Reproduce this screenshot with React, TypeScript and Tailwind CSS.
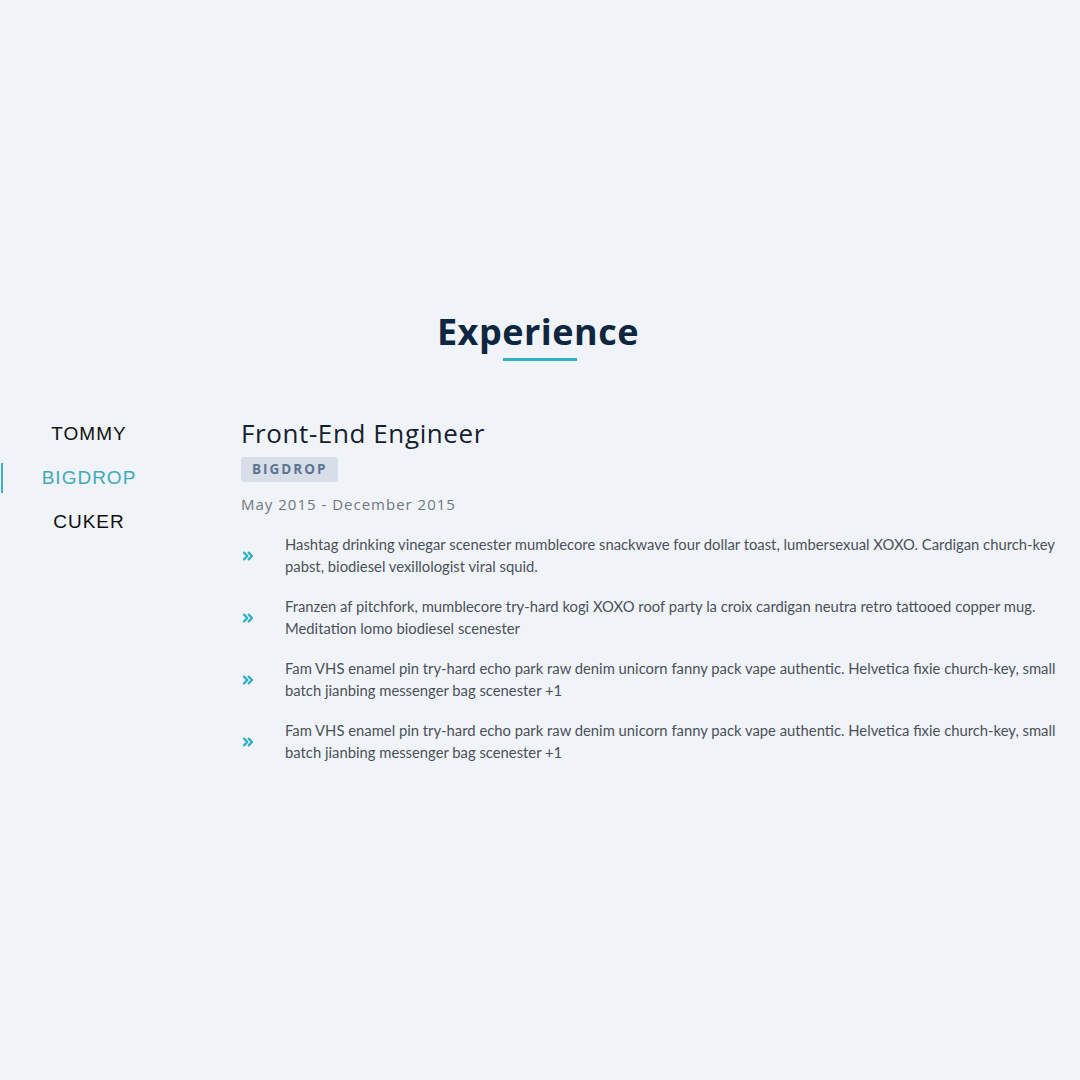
import React from "react";
import { ChevronsRight } from "lucide-react";

const jobs = ["TOMMY", "BIGDROP", "CUKER"];

const points = [
  "Hashtag drinking vinegar scenester mumblecore snackwave four dollar toast, lumbersexual XOXO. Cardigan church-key pabst, biodiesel vexillologist viral squid.",
  "Franzen af pitchfork, mumblecore try-hard kogi XOXO roof party la croix cardigan neutra retro tattooed copper mug. Meditation lomo biodiesel scenester",
  "Fam VHS enamel pin try-hard echo park raw denim unicorn fanny pack vape authentic. Helvetica fixie church-key, small batch jianbing messenger bag scenester +1",
  "Fam VHS enamel pin try-hard echo park raw denim unicorn fanny pack vape authentic. Helvetica fixie church-key, small batch jianbing messenger bag scenester +1",
];

const App = () => {
  const active = 1;
  return (
    <div className="w-full min-h-[1080px] bg-[#f0f4f9] pt-[308px] font-['Open_Sans',sans-serif]">
      <div className="flex flex-col items-center">
        <h2 className="text-[36px] font-bold text-[#0f2640] tracking-[0.5px] leading-[48px] mr-[4px]">Experience</h2>
        <div className="w-[74px] h-[3px] bg-[#2db3c4] mt-[2px]" />
      </div>

      <div className="flex mt-[50px]">
        <div className="w-[175px] flex flex-col pt-[1px]">
          {jobs.map((j, i) => (
            <div key={j} className="h-[44px] flex items-center">
              <div className={"ml-[1px] w-[2px] h-[30px] " + (i === active ? "bg-[#3fb0bf]" : "bg-transparent")} />
              <div
                className={
                  "flex-1 text-center text-[19px] tracking-[1px] font-['Liberation_Sans',sans-serif] " +
                  (i === active ? "text-[#3fa9b8]" : "text-[#111]")
                }
              >
                {j}
              </div>
            </div>
          ))}
        </div>

        <div className="ml-[66px] w-[834px]">
          <h3 className="mt-[5px] text-[26px] text-[#14202e] tracking-[0.6px] leading-[34px]">Front-End Engineer</h3>
          <div className="mt-[7px] inline-block bg-[#d7dee7] rounded-[3px] px-[11px] h-[25px] leading-[25px] text-[13.5px] font-bold tracking-[2px] text-[#5b7392]">
            BIGDROP
          </div>
          <div className="mt-[11px] text-[15px] leading-[22px] tracking-[1px] text-[#707780]">May 2015 - December 2015</div>

          <ul className="mt-[18px] flex flex-col gap-[18px] font-['Lato',sans-serif]">
            {points.map((p, i) => (
              <li key={i} className="flex items-center">
                <div className="w-[44px] shrink-0 pt-[1px]">
                  <ChevronsRight size={16} strokeWidth={3.5} className="text-[#34b0c0] -ml-[1px]" />
                </div>
                <p className="text-[14.8px] leading-[22px] text-[#4b5058]">{p}</p>
              </li>
            ))}
          </ul>
        </div>
      </div>
    </div>
  );
};

export default App;
